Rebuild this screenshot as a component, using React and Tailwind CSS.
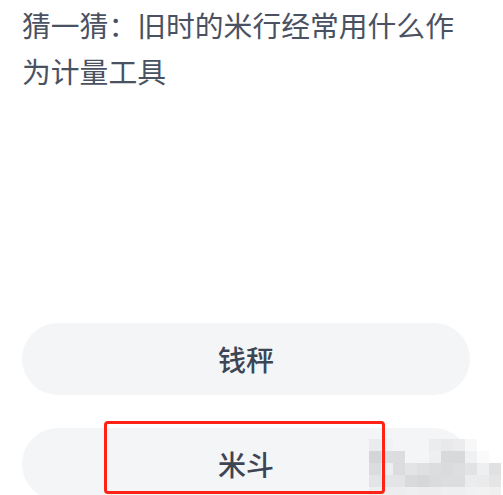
import React from "react";

const mosaic = [
  ["#eaebed", "#f0f2f4", "#f4f5f7", "#f4f5f7", "#f4f5f7", "#ebecee", "#e8e9eb", "#ececee", "#f8f8f9", "#ffffff", "#ffffff"],
  ["#d3d5d7", "#dcdddf", "#dcdddf", "#f4f5f6", "#f4f5f6", "#eeeff1", "#d8d9db", "#d8d9db", "#f0f1f2", "#fafafa", "#ffffff"],
  ["#dadcde", "#eceef0", "#dadcde", "#e3e4e6", "#dfe0e2", "#dcdddf", "#dadbdd", "#dddee0", "#e2e3e5", "#eeeff0", "#e0e1e3"],
  ["#e2e4e6", "#e4e5e7", "#e3e4e6", "#d9dadc", "#d6d7d9", "#dadbdd", "#dcdddf", "#dcdddf", "#ebeced", "#ebebec", "#e4e5e6"],
  ["#eceef0", "#ededef", "#ededef", "#eeeff0", "#ededef", "#ededef", "#eeeff0", "#eeeff0", "#f0f1f2", "#f2f2f3", "#f0f0f1"],
];

export default function App() {
  return (
    <div
      className="relative w-[503px] h-[495px] overflow-hidden bg-white"
      style={{ fontFamily: '"Noto Sans CJK SC", "Noto Sans", sans-serif' }}
    >
      <div className="pl-[22px] pt-[2px] w-[470px]">
        <p className="text-[28.8px] leading-[46px] text-[#4a5262]">
          猜一猜：旧时的米行经常用什么作为计量工具
        </p>
      </div>

      <div className="mt-[229px] pl-[22px] flex flex-col gap-[33px]">
        <div className="w-[448px] h-[72px] rounded-full bg-[#f4f5f7] flex items-center justify-center">
          <span className="text-[28px] font-medium text-[#3d4554]">钱秤</span>
        </div>
        <div className="w-[448px] h-[72px] rounded-full bg-[#f4f5f7] flex items-center justify-center">
          <span className="text-[28px] font-medium text-[#3d4554]">米斗</span>
        </div>
      </div>

      <div className="absolute left-[369px] top-[439px] flex flex-col">
        {mosaic.map((row, r) => (
          <div key={r} className="flex">
            {row.map((c, i) => (
              <div key={i} className="w-[12px] h-[12px]" style={{ backgroundColor: c }} />
            ))}
          </div>
        ))}
      </div>

      <div className="absolute left-[104px] top-[421px] w-[281px] h-[73px] border-[3px] border-[#ff2317] rounded-[4px]" />
    </div>
  );
}
